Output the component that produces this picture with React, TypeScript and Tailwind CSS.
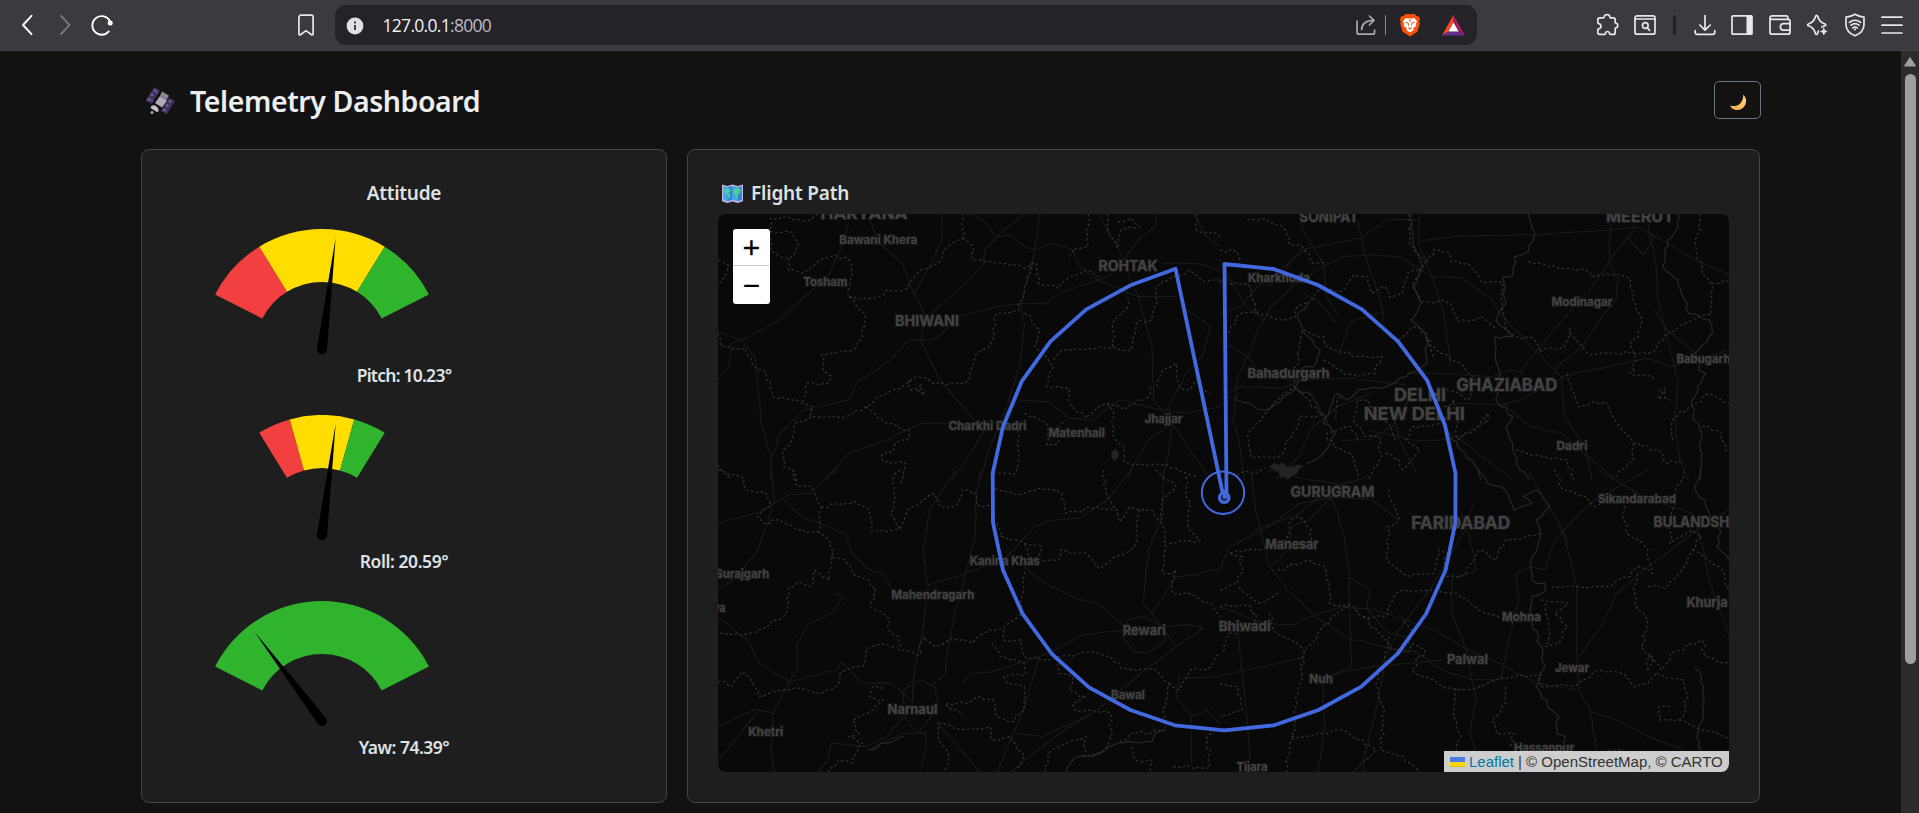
import React from "react";

const SANS = "font-['Noto_Sans','Open_Sans',sans-serif]";

type IconProps = { children: React.ReactNode; className?: string };

function Icon({ children, className = "text-[#e8e7ec]" }: IconProps) {
  return (
    <svg
      width="24"
      height="24"
      viewBox="0 0 24 24"
      fill="none"
      stroke="currentColor"
      strokeWidth="1.7"
      strokeLinecap="round"
      strokeLinejoin="round"
      className={`shrink-0 ${className}`}
    >
      {children}
    </svg>
  );
}

function Slot({ children }: { children: React.ReactNode }) {
  return <div className="flex w-[37.5px] shrink-0 justify-center">{children}</div>;
}

function Toolbar() {
  return (
    <div className="flex h-[51px] w-full items-center border-b border-[#434247] bg-[#3b3a3f]">
      <div className="flex flex-1 items-center">
        <div className="flex w-[335px] items-center">
          <Icon className="ml-[15px] text-white">
            <path d="M16.5 2.8 8 12l8.5 9.2" strokeWidth="1.9" />
          </Icon>
          <Icon className="ml-[14px] text-[#807f84]">
            <path d="M8 2.8 16.5 12 8 21.2" strokeWidth="1.7" />
          </Icon>
          <Icon className="ml-[13px] text-white">
            <path d="M20 8.4A9.3 9.3 0 1 0 18.8 18.4" strokeWidth="1.8" />
            <circle cx="20.2" cy="10" r="2.5" fill="currentColor" stroke="none" />
          </Icon>
          <Icon className="ml-auto mr-[17px] text-[#e8e7ec]">
            <path d="M4.9 21V4.2a2 2 0 0 1 2-2h10.200a2 2 0 0 1 2 2V21c0 1-.9 1.300-1.600.7L12 17.600l-5.500 4.100c-.7.6-1.600.3-1.600-.7Z" />
          </Icon>
        </div>
        <div className="flex h-10 w-[1142px] items-center rounded-[11px] bg-[#242328]">
          <svg width="18" height="18" viewBox="0 0 18 18" className="ml-[11px] mt-px">
            <circle cx="9" cy="9" r="8.4" fill="#e1e0e6" />
            <path d="M9 8v5M9 4.6v1.8" stroke="#3b3a3f" strokeWidth="1.9" />
          </svg>
          <span className="ml-[18.5px] font-['Open_Sans','Noto_Sans',sans-serif] text-[17.5px] leading-[38px] tracking-[-0.7px] text-[#f2f1f6]">
            127.0.0.1<span className="text-[#bdbcc2]">:8000</span>
          </span>
          <div className="ml-auto flex items-center pr-[12px]">
            <Icon className="text-[#a9a8ae]">
              <path d="M3 8v11.2a2 2 0 0 0 2 2h13.6a2 2 0 0 0 2-2V17" />
              <path d="M7.6 16.6c.2-5.6 3.8-9 12-9.2M15.4 3l4.6 4.4-4.6 4.6" />
            </Icon>
            <div className="ml-[7px] h-5 w-px bg-[#89888d]" />
            <svg width="22" height="24" viewBox="0 0 22 24" className="ml-[13px]">
              <path d="M6.4 1h9.2l1.8 2 2.2.2 1.6 3-1 2 .6 2.2-2.4 8.4L11 23.4l-7.4-4.6L1.2 10.4l.6-2.2-1-2 1.6-3L4.6 3Z" fill="#fb4f09" />
              <path d="m6.5 5 2.8.6L11 5.2l1.7.4 2.8-.6 2.6 3.5-1.2 2.2.4 2.2-3.2 2.4.7 1.7-3.8 2.6-3.8-2.6.7-1.7-3.2-2.4.4-2.2-1.2-2.2Z" fill="#fff" />
              <path d="M6.3 9.200 9.200 10l.2 2.600M15.700 9.200 12.800 10l-.2 2.600M9 14.600l2 1 2-1M11 6v3M11 15.600v1.200" fill="none" stroke="#fb4f09" strokeWidth="1" />
            </svg>
            <svg width="23" height="21" viewBox="0 0 23 21" className="ml-[21px]">
              <path d="M11.5 0v7.5L6.4 16.4 0 20.5Z" fill="#ff4724" />
              <path d="M11.5 0 23 20.5l-6.4-4.1-5.1-8.9Z" fill="#9e1f63" />
              <path d="m0 20.5 6.4-4.1h10.2l6.4 4.1Z" fill="#662d91" />
              <path d="m11.5 7.6 5.1 8.8H6.4Z" fill="#fff" />
            </svg>
          </div>
        </div>
        <div className="ml-auto flex items-center pr-[8px]">
          <Slot>
            <Icon>
              <path d="M4.800 4.800h3.400c.6 0 1-.4 1-1C9.200 2.400 10.300 1.600 12 1.600s2.800.8 2.800 2.200c0 .6.400 1 1 1h2.600c1.200 0 1.800.7 1.800 1.800v2.600c0 .6.300.9.800 1 1.200.200 1.800 1 1.800 2.300s-.6 2.100-1.800 2.300c-.5.1-.8.400-.8 1v3.600c0 1.300-.6 2-1.800 2h-2.800c-.6 0-.9-.3-1-.9-.2-1.300-.9-2-2.100-2s-1.900.7-2.100 2c-.1.600-.4.900-1 .9H4.600c-1.200 0-1.800-.7-1.800-1.900v-2.700c0-.6.300-.9.900-1 1.400-.3 2.300-1.200 2.300-2.600s-.9-2.300-2.300-2.600c-.6-.1-.9-.4-.9-1V6.800c0-1.300.7-2 2-2Z" />
            </Icon>
          </Slot>
          <Slot>
            <Icon>
              <rect x="2" y="2.800" width="20" height="18.400" rx="2" />
              <path d="M2 6h20" />
              <circle cx="12.300" cy="12.500" r="2.800" />
              <path d="m14.500 15 2 2.300" strokeWidth="1.800" />
            </Icon>
          </Slot>
          <div className="flex w-[22.5px] justify-center">
            <div className="h-5 w-[3px] rounded bg-[#232227]" />
          </div>
          <Slot>
            <Icon>
              <path d="M12 2.500V17M6.800 12l5.200 5.200 5.200-5.200" />
              <path d="M2.200 17.500v1.700a2.200 2.200 0 0 0 2.200 2.200h15.200a2.200 2.200 0 0 0 2.200-2.200v-1.700" />
            </Icon>
          </Slot>
          <Slot>
            <Icon>
              <rect x="2" y="2.800" width="20" height="18.400" rx="1" />
              <rect x="16.500" y="2.500" width="5.500" height="19" fill="currentColor" stroke="none" />
            </Icon>
          </Slot>
          <Slot>
            <Icon>
              <path d="M22 11.200V8.400a2 2 0 0 0-2-2H3.800A1.800 1.800 0 0 1 2 4.600 1.800 1.800 0 0 1 3.800 2.900h14.400c1 0 1.700.7 1.700 1.700v1.600M2 4.700v14.500a2 2 0 0 0 2 2h16a2 2 0 0 0 2-2v-2" />
              <path d="M22 10.700h-6.400a3.200 3.200 0 0 0 0 6.400H22Z" />
            </Icon>
          </Slot>
          <Slot>
            <Icon>
              <path d="M20 12.800c.5-.2.800-.5.800-.9s-.3-.7-.8-.9c-4.300-1.300-6.300-3.500-7.400-7.700-.1-.5-.5-.9-1-.9s-.9.400-1 .9c-1 4.300-2.800 6.300-7.200 7.700-.5.2-.8.5-.8.900s.3.700.800.900c4.400 1.400 6 3.400 7.200 7.900.1.400.4.800.900.8s.9-.4 1-.8c.2-.9.500-1.800.9-2.600M20 12.800c-1.200.3-2.200.7-3.100 1.200" />
              <path d="m18.800 15.200.9 2.400 2.400.9-2.400.9-.9 2.500-.9-2.500-2.400-.9 2.400-.9Z" fill="currentColor" strokeWidth=".8" />
            </Icon>
          </Slot>
          <Slot>
            <Icon>
              <path d="M12 1.300c2.600 1.700 5.500 2.600 9 2.900v7.200c0 5-3.300 9-9 11.400C6.300 20.400 3 16.400 3 11.400V4.200c3.500-.3 6.400-1.200 9-2.900Z" />
              <path d="M6.500 9.400c3.300-2.800 7.700-2.800 11 0M8 12.200c2.400-1.900 5.600-1.900 8 0M9.800 14.900c1.400-1 3-1 4.400 0" />
              <circle cx="12" cy="16.400" r="1" fill="currentColor" stroke="none" />
            </Icon>
          </Slot>
          <Slot>
            <Icon>
              <path d="M2 4.200h20M2 12.200h20M2 20h20" />
            </Icon>
          </Slot>
        </div>
      </div>
    </div>
  );
}

function Satellite() {
  return (
    <svg width="30" height="28" viewBox="0 0 30 28">
      <path d="M9.5 0 15 3.5 6.5 17 .5 13.5Z" fill="#3d3550" />
      <path d="M24 10.5 30 14l-8.5 13.5L16 24Z" fill="#3d3550" />
      <g fill="#7a52c4">
        <circle cx="9.8" cy="3.7" r="1.4" />
        <circle cx="7" cy="8" r="1.4" />
        <circle cx="4" cy="12.5" r="1.4" />
        <circle cx="12" cy="5.5" r="1" />
        <circle cx="7" cy="13.5" r="1" />
        <circle cx="25" cy="14.5" r="1.4" />
        <circle cx="22.3" cy="18.6" r="1.4" />
        <circle cx="19.5" cy="23" r="1.4" />
      </g>
      <path d="m15 9 7 4.5-5 7-7-4.5Z" fill="#b3a8b8" />
      <path d="m17 4.5 7 4-2.5 4.5-6.5-4Z" fill="#8d8494" />
      <path d="M5.5 21c1-4 6-3.5 8 1.5.5 1.5 0 2.5-1.5 2.5Z" fill="#c9bfd0" />
      <circle cx="7" cy="25.5" r="1.6" fill="#a99db2" />
    </svg>
  );
}

function WorldMap() {
  return (
    <svg width="21" height="19" viewBox="0 0 21 19">
      <path d="M0 .5 5.3 2l5.200-1.500L15.700 2 21 .5v16.800L15.700 19l-5.200-1.500L5.300 19 0 17.300Z" fill="#c5b5dc" />
      <path d="M1.200 2.200 5.300 3.200v14L1.200 16ZM10.500 1.900l5.200 1.300v14l-5.200-1.300Z" fill="#42a7ee" />
      <path d="m5.300 3.200 5.200-1.300v14l-5.200 1.300ZM15.700 3.200l4.100-1V16l-4.100 1.200Z" fill="#2d86d4" />
      <path d="m2.200 5 5.500-.5 1 2.500-2 2 1.500 1.500-.5 3.500L6.500 15l-.5-4-3-2.500ZM11.500 6l2-1.800 3.700-.2 1.600 2-.8 3-2 1-.5 3-1.500 1.500-1-4-2-1.500Z" fill="#48cf9a" />
    </svg>
  );
}

function Moon() {
  return (
    <svg width="17" height="17" viewBox="0 0 17 17">
      <defs>
        <linearGradient id="moon" x1="1" y1="0" x2="0" y2="1">
          <stop offset="0" stopColor="#ffd77a" />
          <stop offset="1" stopColor="#f9a94e" />
        </linearGradient>
      </defs>
      <path d="M13.200.400C16 3 17 7.200 15.200 11c-2.300 5-9 6.800-13.600 3C1 13.400.600 12.500.400 11.400c3 1.200 7 .7 9.700-2 2.400-2.400 3.400-5.700 3.100-9Z" fill="url(#moon)" />
    </svg>
  );
}

/* ---------- Gauges ---------- */

type Zone = { from: number; to: number; color: string };
const RED = "#f23f3f";
const YELLOW = "#ffdd00";
const GREEN = "#30b32d";
const CX = 107;
const CY = 120;

function polar(r: number, deg: number) {
  const a = (deg * Math.PI) / 180;
  return `${(CX + r * Math.sin(a)).toFixed(2)} ${(CY - r * Math.cos(a)).toFixed(2)}`;
}

type GaugeProps = { zones: Zone[]; angle: number; label: string; spacing: string };

function Gauge({ zones, angle, label, spacing }: GaugeProps) {
  return (
    <div className="h-[186px]">
      <svg width="215" height="126" viewBox="0 0 215 126" className="ml-[44px] block">
        {zones.map((z) => (
          <path
            key={z.from}
            d={`M${polar(120, z.from)}A120 120 0 0 1 ${polar(120, z.to)}L${polar(67, z.to)}A67 67 0 0 0 ${polar(67, z.from)}Z`}
            fill={z.color}
          />
        ))}
        <g transform={`rotate(${angle} ${CX} ${CY})`}>
          <path d={`M${CX} ${CY - 112}L${CX + 5.1} ${CY}A5.1 5.1 0 0 1 ${CX - 5.1} ${CY}Z`} fill="#000" />
        </g>
      </svg>
      <p className={`pt-[6px] text-center text-[17.5px] font-semibold leading-[28px] text-[#dee2e6] ${spacing}`}>
        {label}
      </p>
    </div>
  );
}

const threeZones = (outer: number, inner: number): Zone[] => [
  { from: -outer, to: -inner, color: RED },
  { from: -inner, to: inner, color: YELLOW },
  { from: inner, to: outer, color: GREEN },
];

/* ---------- Map ---------- */

// [text, centre x, baseline y, width, size]
const LABELS: [string, number, number, number, number][] = [
  ["HARYANA", 864, 218.3, 87, 15],
  ["Bawani Khera", 878.3, 243.7, 78, 12],
  ["Tosham", 825.3, 285, 44, 12],
  ["BHIWANI", 927, 325.3, 64, 14],
  ["ROHTAK", 1128, 270, 59, 14],
  ["Charkhi Dadri", 987.5, 429.3, 78, 12],
  ["Matenhail", 1076.7, 436.3, 56.5, 12],
  ["Jhajjar", 1163.5, 422.7, 38, 12],
  ["SONIPAT", 1328.8, 221, 59, 14],
  ["MEERUT", 1640, 221, 68, 15],
  ["Kharkhoda", 1279, 281.3, 62, 12],
  ["Modinagar", 1582, 305.3, 61, 12],
  ["Bahadurgarh", 1288.5, 377.3, 82, 13],
  ["Babugarh", 1703.5, 362.3, 54, 12],
  ["GHAZIABAD", 1506.8, 390.7, 101, 17],
  ["DELHI", 1420, 400, 52, 18],
  ["NEW DELHI", 1414.3, 419.3, 101, 18],
  ["Dadri", 1572, 449.3, 31, 12],
  ["Kanina Khas", 1004.7, 564.7, 70, 12],
  ["Surajgarh", 742.3, 577, 54, 12],
  ["va", 719.5, 611, 12, 12],
  ["Mahendragarh", 932.8, 598.3, 83, 12],
  ["Rewari", 1144.3, 634.7, 43, 13],
  ["Narnaul", 912.5, 713, 50, 13],
  ["Khetri", 765.7, 735, 35, 12],
  ["Bawal", 1128, 698.3, 34, 12],
  ["GURUGRAM", 1332.5, 496.3, 84, 14.5],
  ["Manesar", 1291.8, 548.3, 53, 13],
  ["FARIDABAD", 1460.7, 528.3, 99, 17],
  ["Sikandarabad", 1637, 502, 78, 12],
  ["BULANDSHAHR", 1706, 526.7, 105, 14.5],
  ["Khurja", 1707, 606.3, 41, 13],
  ["Mohna", 1521.5, 620, 39, 12],
  ["Bhiwadi", 1244.7, 630.7, 52, 13],
  ["Palwal", 1467.4, 663, 41, 13],
  ["Jewar", 1572, 671.7, 34, 12],
  ["Nuh", 1321, 682, 23.5, 12],
  ["Hassanpur", 1544, 751, 60, 12],
  ["Tijara", 1252, 770, 31, 12],
];

const FLIGHT =
  "1226.5,496 1224.5,264 1273.7,269 1317.8,285 1361.9,309.3 1398,341.3 1427.3,380.7 1444.9,425 1455.5,473.3 1455.4,522.7 1445.6,570 1426,614 1397.9,653.3 1361.3,686.7 1318.5,710 1274,725.3 1224.5,730.3 1174.8,725.3 1130.4,710 1089,687.3 1051.9,654 1022.3,613.3 1003,570 993,522.7 992.7,473.3 1003,426.7 1021.6,381.7 1050.5,341.3 1086.3,309.3 1130.4,285.3 1175.5,268.7 1223.5,497";

type Tile = { transform: string; borders: string[]; roads: string[]; rivers: string[] };

const TILES: Tile[] = [
  {
    transform: "translate(680 140) scale(.3444 .3333)",
    borders: [
      "400,222 380,240 262,235 262,275 325,277 345,310 330,345 300,355 262,330 262,275",
      "315,355 315,390 360,400 400,365 450,345 492,360 495,420 490,470 535,520 530,590 510,625 410,645 415,690 440,710 430,730 370,730 355,790",
      "490,470 560,475 600,450 660,445 690,400 740,375 790,310 820,295 820,222",
      "820,295 850,320 850,360 930,370 1000,385 1035,370 1040,430 1100,445 1130,410 1180,390 1215,410",
      "110,580 120,620 190,625 215,680 250,700 270,770 355,790 385,800 380,830 470,835 540,800 600,760 640,745 690,710 770,735 840,720 855,650 900,620 920,520 985,510 1000,440 1025,360",
      "1000,520 1045,570 1030,620 1085,680 1065,740 1130,745 1130,790 1180,835 1240,790 1290,810 1360,770 1365,740",
      "1085,660 1110,630 1240,625 1310,630 1325,550 1370,540 1385,490 1380,440 1430,410 1480,390 1520,425 1568,420",
      "1255,620 1260,540 1300,500 1300,470",
      "380,830 330,860 325,900 300,930 300,980 335,1000 340,1030",
      "540,800 600,850 665,870 660,900 625,910 620,935 590,940 590,965 655,970 640,1030",
      "1130,350 1145,325 1185,320 1185,222",
      "1240,222 1250,290 1270,325 1280,270 1335,260 1310,235 1270,245",
      "1240,790 1260,830 1255,880 1290,920 1290,965 1400,975 1500,1010",
      "1385,740 1400,690 1440,670 1450,740 1480,750 1500,720 1540,760",
      "1000,820 1065,850 1065,915 1100,910 1100,860 1120,840",
      "980,870 985,940 970,1005 915,1000",
      "665,720 670,750 700,735 710,765 680,750",
      "110,360 140,375 130,410 110,440",
      "1500,222 1500,270 1568,290",
      "110,975 150,1015",
    ],
    roads: [
      "490,250 465,330 430,410 350,480 290,540 180,600 110,575",
      "180,600 220,660 235,850 265,960 265,1020",
      "110,720 140,680 150,610 180,600",
      "550,240 580,310 645,370 670,440 710,520 700,600 740,690 770,740 860,845 935,850",
      "760,222 760,300 740,350 680,460",
      "1000,222 940,270 885,330 880,370 850,410 730,520",
      "810,530 920,500 990,490 1060,492 1100,460 1215,420 1240,410 1300,360",
      "1045,222 1030,330 990,490 1000,560 985,680 945,810 900,920 870,1020",
      "840,222 880,240 920,290 960,285 1000,320 1030,330 1080,310 1140,330 1160,380 1215,420 1330,470 1440,470",
      "780,560 750,590 730,600 665,600 620,650 560,700 520,720 490,780 360,810 290,880 265,960",
      "845,850 700,850 600,900 490,940 420,1020",
      "790,1020 850,930 890,860",
      "940,830 990,780 1070,785 1130,835 1200,840 1275,780 1380,805 1470,820 1568,800",
      "1300,400 1330,470 1370,620 1375,780 1430,850 1480,930 1540,1010",
      "1430,850 1420,930 1400,1020",
      "1430,850 1360,900 1300,1010",
      "1215,222 1290,360 1330,300 1380,260 1385,222",
      "1440,390 1460,500 1540,560 1520,640 1470,700 1415,810",
      "1400,370 1500,370 1568,390",
      "1490,222 1530,290 1568,320",
    ],
    rivers: [],
  },
  {
    transform: "translate(1220 140) scale(.3444 .3333)",
    borders: [
      "80,240 130,235 190,270 200,310 240,320 270,370 310,370",
      "0,330 50,335 55,370 0,380",
      "0,425 80,430 90,470 110,520 180,540 220,530 225,500 255,490",
      "25,580 60,520 110,515",
      "225,640 235,590 240,570 300,590 310,620 400,650 470,650 450,700 400,710 350,690 300,660",
      "255,490 300,440 350,455 390,405 430,410 440,460 480,440 490,470 530,460 545,400 580,390",
      "550,222 550,310 595,370 560,430 585,490 645,480 670,490 690,545 760,530 800,565",
      "600,365 620,330 660,335 670,365 720,370 760,425 820,425 820,510 830,570 860,590 910,595 930,635",
      "895,365 985,385 1060,390 1080,410 1140,405 1190,415 1205,490 1225,540 1215,590 1190,610 1210,660 1190,700 1260,715",
      "930,635 1000,620 1015,565 1040,610 1080,645 1150,640 1260,635 1310,575 1390,530 1425,525 1430,430 1478,425",
      "1395,222 1395,270 1380,300 1400,400 1430,440",
      "400,900 380,860 310,880 330,920 380,940 400,1020",
      "225,640 215,740 160,785 100,860 80,890 90,950 170,950 210,880 230,830 290,830",
      "215,740 260,780 300,830",
      "510,900 490,850 440,830 430,780 400,780 390,850 420,890 460,890 470,950 440,1000 430,1020",
      "480,940 520,960 530,990 580,930 540,900 560,860 640,850",
      "600,600 640,640 700,670 740,720 720,780 640,740",
      "520,600 560,560 600,580 620,650",
      "650,800 680,780 690,900 740,870 780,820 770,850",
      "1010,700 1040,800 1120,785 1140,830 1160,860 1195,900 1200,960 1140,1015",
      "1200,910 1270,930 1300,970 1340,960",
      "860,930 920,945 1010,960 1030,1020",
      "1275,750 1305,780 1270,775 1300,740",
      "1315,900 1315,840 1420,760 1478,790",
      "1400,860 1450,870 1470,940",
      "20,1000 110,995 130,985",
      "350,770 340,800 330,840",
    ],
    roads: [
      "230,222 240,270 300,370 310,470 345,530",
      "400,240 420,340 450,430 475,520 470,550",
      "0,520 60,500 110,440 210,360 250,325 410,295 440,270 490,240 580,240",
      "240,320 190,390 140,440",
      "220,430 150,500 110,570 80,650 50,710 40,850 55,900 70,1020",
      "220,430 300,380 360,350 425,345 520,350 615,410 700,412 790,480 820,530 915,630 1000,720",
      "580,222 575,305 615,410 650,520 670,680",
      "580,303 700,287 900,285 1130,270 1210,260",
      "1135,250 1130,365 1080,440 1010,520 920,630 870,700",
      "1210,260 1130,360 1155,420 1150,480 1110,530 1050,620 980,680 960,720",
      "1240,240 1265,370 1270,470 1300,600 1330,720 1320,850 1335,960 1360,1020",
      "1210,260 1300,310 1380,360 1478,405",
      "1180,290 1230,345 1260,290 1240,270",
      "0,600 80,650 120,700 200,720 380,715 540,735",
      "990,710 1240,655 1310,680 1380,660 1478,630",
      "990,710 1000,830 1060,920 1080,1020",
      "820,790 900,860 990,880 1080,960 1140,1010",
      "1260,510 1300,570 1380,640",
      "345,645 380,545 475,515",
      "0,770 60,740 180,745 260,715",
      "160,1020 230,950 260,870 340,800 440,760",
      "690,790 820,795 870,780 1000,710",
      "550,700 640,700 790,710 840,690 880,700",
      "240,460 280,480 340,550",
      "430,870 560,900 640,900 700,890 780,840",
      "500,800 520,900 570,1000",
      "350,900 430,900 500,860 560,760",
      "0,360 40,440 75,500 130,540",
      "660,870 700,900 800,980 850,1020",
    ],
    rivers: [
      "555,222 560,310 590,380 560,440 585,490 555,540 600,590 600,670 540,710 470,745 400,750 370,780 340,760 320,800 300,850 335,880 300,940 250,970",
      "895,222 915,280 895,335 855,350 850,405 820,410 830,490 800,540 850,590 800,590 800,660 815,700 800,780 850,830 830,860 850,910 870,990 900,1020",
      "1330,222 1330,265 1300,300 1285,380 1330,420 1360,520 1420,540 1430,580 1380,640 1390,690 1410,700 1370,780 1375,840 1400,880 1395,1020",
      "40,770 130,810 220,745 270,770 310,850",
      "650,860 690,920 750,990 760,1020",
      "255,490 225,520 240,570 290,630 280,670 230,690 220,740",
    ],
  },
  {
    transform: "translate(680 470) scale(.3444 .3333)",
    borders: [
      "110,0 180,20 190,60 250,70 260,110 225,140 240,160 290,150 340,180 400,185 410,110 380,50 340,50 330,0",
      "410,110 510,95 550,120 555,185 640,175 660,120 740,70 755,110 800,110 820,60 860,70 860,105 910,110",
      "640,0 620,20 620,100 610,130 640,175",
      "400,185 440,220 440,260 480,270 500,310 570,355 555,410 610,450 605,480 635,500 635,540 690,555 710,500 740,530 790,505 850,520 900,480 940,475 990,430 995,330 1000,300",
      "440,260 435,330 390,300 380,350 345,335 315,355 310,430 250,475 200,490 110,495",
      "110,635 150,650 180,605 200,620 230,680 300,660 350,655 410,670 460,645 470,605 530,590 540,540 580,525 630,530",
      "915,55 980,75 1040,55 1110,70 1120,130 1215,110 1270,120 1275,155 1310,110 1370,120 1410,190 1400,310 1440,300 1430,370 1490,375 1540,400 1568,440",
      "920,160 930,200 1000,220 1045,225 1045,270 1100,270 1105,240 1180,250 1215,295 1250,270 1320,230 1335,120",
      "905,520 930,560 1000,580 1005,610 940,620 950,640 1000,650 1000,720 970,755 920,740 910,690 870,680 830,700 770,700 820,740",
      "750,760 830,780 900,770 905,810 960,800 1000,860 975,900",
      "940,480 940,510 990,510 1000,560 1060,570 1100,560 1190,545 1250,560 1280,595 1380,600 1420,640 1400,720 1410,780 1320,790 1270,820",
      "1095,580 1100,610 1140,620 1130,660 1180,680 1140,700 1145,720 1195,720 1250,730 1250,800 1230,840 1180,860",
      "1000,222 1010,260 1040,265",
      "590,655 560,650 550,680 590,690 560,720 500,750 520,790 490,800 530,820 500,880 460,870 430,906",
      "750,770 750,810 780,850 765,906",
      "1170,860 1180,800 1100,830 1070,850 1060,906",
      "1230,0 1240,80 1270,120",
      "1380,0 1440,50 1400,90 1400,150",
      "1470,20 1480,180 1510,210 1420,220",
      "1420,640 1450,660 1480,600 1530,600 1568,550",
      "1568,780 1530,800 1540,890 1430,890",
      "1310,830 1320,870 1370,870 1365,906",
    ],
    roads: [
      "265,0 275,90 240,200 220,250 165,320 110,360",
      "455,0 375,72 320,72 280,95 220,130 110,160",
      "300,90 360,145 480,190 500,250 550,300 590,310 610,350",
      "800,0 725,120 705,250 720,350 705,490 680,600 675,695",
      "875,0 860,70 858,190 820,350 800,420 775,550 770,610 725,650",
      "450,370 475,380 440,430 370,465 340,520 340,600 315,640 270,730 265,850 275,906",
      "110,440 195,510 230,580 290,620 320,635 460,597 465,575 530,640 610,640 645,665",
      "720,345 830,310 950,260 1030,170 1080,150 1160,145 1240,90 1310,0",
      "1000,290 1060,340 1150,385 1220,405 1290,470",
      "1290,480 1170,495 1080,545 1000,575 905,605 840,610 820,640",
      "1405,0 1400,140 1360,240 1345,400 1370,430 1440,525",
      "1370,430 1440,320 1500,315 1540,300 1568,300",
      "1290,480 1300,450 1350,440 1400,470 1410,510 1360,550 1320,545 1285,500",
      "1400,470 1480,465 1520,475 1440,530 1350,600 1200,730 1100,790 960,906",
      "650,700 650,660 700,630 740,650 750,700 715,760 690,790 650,740 650,700",
      "110,770 170,740 220,718 270,730",
      "230,720 110,875",
      "710,790 650,790 545,840",
      "650,740 600,800 540,830 440,820 430,870 400,906",
      "710,780 715,830 700,900",
      "740,750 870,906",
      "1045,560 1000,710 920,906",
      "970,790 1050,800 1200,730",
      "1450,620 1440,680 1485,740 1485,880",
      "1485,740 1530,720 1568,760",
      "1568,620 1450,625",
      "680,600 675,695 640,660",
    ],
    rivers: ["1120,906 1150,860 1200,860 1270,820 1370,815 1380,790 1410,780", "545,840 600,820 650,800"],
  },
  {
    transform: "translate(1220 470) scale(.4458 .3333)",
    borders: [
      "210,240 205,180 175,140 155,160 145,210 100,235 20,250 50,260 40,340 0,360",
      "130,300 200,270 235,290 245,400 290,405 320,440 370,440 390,380 410,360 480,360 540,380 580,420 640,450 660,460",
      "380,60 400,150 375,170 380,280 420,320 480,310 490,240 510,250 500,320 540,320 580,240 620,270 640,210 720,190",
      "750,0 770,60 820,80 840,110 900,80 910,180 960,240 970,310 940,290 920,320 860,350 800,350 740,350",
      "935,310 930,400 960,450 945,530 970,570 960,600",
      "960,350 1000,355 1030,310 1060,240 1080,200 1060,180 1010,220 1010,150 1040,0",
      "720,390 780,400 750,430 780,470 760,520 730,530 740,490 730,400",
      "1060,240 1120,290 1142,370",
      "720,650 800,645 850,600 900,610 930,650 960,640 980,610",
      "960,600 965,550 990,600 1010,550 1080,510 1090,560 1142,580",
      "980,610 1040,630 1050,680 1030,750 985,750 985,710 1010,710",
      "1030,750 1080,780 1142,805",
      "430,520 460,540 430,600 520,655 570,655 600,640 660,620 720,615 720,650",
      "530,655 525,720 540,800 530,850",
      "640,650 640,700 610,750 620,790 660,790 650,830",
      "110,430 120,480 190,545 250,440 290,400",
      "190,545 180,640 165,760 150,906",
      "380,500 370,560 350,640 370,720 360,840 410,860 450,906",
      "160,800 240,790 270,780 320,810 350,840 300,906",
      "0,640 40,650 50,720 0,740",
      "0,410 70,410 80,450 50,480 20,490 10,550",
      "130,370 90,400 40,350",
      "320,440 380,530 420,550 430,480 410,450",
      "870,840 900,840 930,870",
    ],
    roads: [
      "70,0 80,120 95,200 110,290 160,370 210,435 290,505 380,535 440,545 500,600 565,630 630,630 650,500 670,390 665,310 700,290 730,300 750,210 830,100 880,60 960,0",
      "250,80 280,200 290,320 335,360 330,420 380,490 420,500",
      "250,80 340,90 400,150",
      "250,80 200,150 160,170 155,240 110,290",
      "260,80 180,100 110,170 20,230 0,300",
      "0,410 100,460 170,465 180,450 270,410 350,420 480,480 560,540 640,590 710,640 800,660",
      "540,130 560,200 575,300 520,330 520,430 550,530 565,630 575,690 560,790 580,880",
      "570,100 550,180 470,360 400,480 370,570 355,690 325,850 320,906",
      "770,180 800,350 800,530 805,660 830,720 845,840",
      "805,560 860,460 890,370 970,280 1060,190 1142,120",
      "830,725 890,750 960,800 1040,840",
      "850,0 960,90 1060,130 1080,220 1100,340 1142,500",
      "290,320 290,400 295,590 230,630",
      "40,490 50,610 65,820 65,906",
      "230,620 340,590 500,570",
      "230,630 235,770 220,906",
      "190,560 100,590 0,615",
      "690,0 760,160 780,220",
      "80,180 180,130 240,60 330,20",
      "110,0 200,30 300,50",
    ],
    rivers: [
      "580,0 600,40 640,60 660,120 700,100 680,80 710,60 740,110 710,150 720,200 700,260 700,330 730,340 730,365 700,380 700,460 715,500 725,600 710,650 735,710 760,740 755,790 775,800 770,825",
      "1080,0 1065,50 1090,110 1120,170 1115,230 1142,270",
      "1065,595 1080,620 1085,720 1070,800 1080,840",
    ],
  },
];

// Breaks every straight run into short uneven steps so lines look surveyed.
function roughen(points: string, amp: number, seed: number) {
  const pts = points.split(" ").map((p) => p.split(",").map(Number));
  let s = seed * 7919 + 17;
  const rnd = () => {
    s = (s * 1103515245 + 12345) % 2147483648;
    return s / 2147483648 - 0.5;
  };
  const out: string[] = [`${pts[0][0]},${pts[0][1]}`];
  for (let i = 1; i < pts.length; i++) {
    const [x0, y0] = pts[i - 1];
    const [x1, y1] = pts[i];
    const n = Math.max(1, Math.round(Math.hypot(x1 - x0, y1 - y0) / 16));
    for (let k = 1; k < n; k++) {
      const t = k / n;
      out.push(`${(x0 + (x1 - x0) * t + rnd() * amp).toFixed(1)},${(y0 + (y1 - y0) * t + rnd() * amp).toFixed(1)}`);
    }
    out.push(`${x1},${y1}`);
  }
  return out.join(" ");
}

function FlightMap() {
  return (
    <div className="relative h-[558px] w-[1011px] overflow-hidden rounded-lg bg-[#090909]">
      <svg width="1011" height="558" viewBox="718 214 1011 558" className="block">
        {TILES.map((t, i) => (
          <g key={i} transform={t.transform} fill="none" strokeLinejoin="round">
            {t.roads.map((p, j) => (
              <polyline key={`a${j}`} points={roughen(p, 3, j + 1)} stroke="#1b1b1b" strokeWidth="1.1" vectorEffect="non-scaling-stroke" />
            ))}
            {t.rivers.map((p, j) => (
              <polyline key={`b${j}`} points={roughen(p, 11, j + 60)} stroke="#262626" strokeWidth="1.3" vectorEffect="non-scaling-stroke" />
            ))}
            {t.borders.map((p, j) => (
              <polyline key={`c${j}`} points={roughen(p, 12, j + 30)} stroke="#323232" strokeWidth="1.3" strokeDasharray="2.6 2.4" vectorEffect="non-scaling-stroke" />
            ))}
          </g>
        ))}
        <path d="m1274 463 5 2 3-3 4 4 5 1 6-2 7 1-5 3-2 5-6 2-3 4-4-3-4 1-1-6-6-3-4-2ZM1112 451l4-2 3 4-1 5-4 3-3-4Z" fill="#242424" />
        <g fontFamily="Inter, sans-serif" fontWeight="700" textAnchor="middle" fill="#434343" stroke="#171717" strokeWidth="2" paintOrder="stroke" strokeLinejoin="round">
          {LABELS.map(([text, x, y, w, size]) => (
            <text key={text} x={x} y={y + 0.6} fontSize={size} textLength={w} lengthAdjust="spacingAndGlyphs">
              {text}
            </text>
          ))}
        </g>
        <g fill="none" stroke="#4169e1">
          <polyline points={FLIGHT} strokeWidth="3.8" strokeLinejoin="round" strokeLinecap="round" />
          <circle cx="1223" cy="492.7" r="21.2" strokeWidth="2" />
          <circle cx="1224.2" cy="497.7" r="4.8" strokeWidth="3.2" fill="#1b2a56" />
          <path d="M1224.5 490v7h3" strokeWidth="3" />
        </g>
      </svg>
      <div className="absolute left-[15px] top-[15px] flex h-[75px] w-[37px] flex-col overflow-hidden rounded-[3px] bg-white text-center font-['DejaVu_Sans',sans-serif] text-[23px] text-black">
        <button className="h-[37px] border-b border-[#ccc] leading-[36px] [-webkit-text-stroke:0.5px_black]">+</button>
        <button className="h-[38px] leading-[36px] [-webkit-text-stroke:0.3px_black]">−</button>
      </div>
      <div className="absolute bottom-0 right-0 flex h-[21px] w-[285px] items-center whitespace-nowrap bg-[#ffffffcc] pl-[6px] font-['Liberation_Sans',Arial,sans-serif] text-[15px] leading-[21px] text-[#333]">
        <svg width="15" height="10" viewBox="0 0 15 10" className="mr-[4px]">
          <path d="M0 0h15v5H0z" fill="#4c7be1" />
          <path d="M0 5h15v4H0z" fill="#ffd500" />
          <path d="M0 9h15v1H0z" fill="#e0bc00" />
        </svg>
        <span className="text-[#0078a8]">Leaflet</span>
        <span className="ml-[4px]">| © OpenStreetMap, © CARTO</span>
      </div>
    </div>
  );
}

export default function App() {
  return (
    <div className={`flex h-[813px] w-[1919px] flex-col overflow-hidden bg-[#121212] ${SANS}`}>
      <Toolbar />
      <div className="flex min-h-0 flex-1">
        <main className="flex-1 px-[141px] pt-[30px]">
          <header className="flex h-[38px] items-center justify-between">
            <div className="flex items-center pl-[4px] pt-[2px]">
              <Satellite />
              <h1 className="ml-[15px] text-[28.5px] font-semibold leading-[38px] tracking-[-0.42px] text-[#eceef0]">
                Telemetry Dashboard
              </h1>
            </div>
            <button className="-mr-px flex h-[38px] w-[47px] items-center justify-center rounded-[5px] border border-[#6c757d] pl-px pt-[4px]">
              <Moon />
            </button>
          </header>
          <div className="mt-[30px] flex gap-5">
            <section className="h-[654px] w-[526px] shrink-0 rounded-lg border border-[#444] bg-[#1e1e1e] px-[29px] pt-[28px]">
              <h2 className="h-[51px] text-center text-[19px] font-semibold leading-[30px] tracking-[-0.25px] text-[#dee2e6]">
                Attitude
              </h2>
              <Gauge zones={threeZones(63, 31.5)} angle={7} label="Pitch: 10.23°" spacing="tracking-[-0.75px]" />
              <Gauge zones={threeZones(31.5, 15.6)} angle={7} label="Roll: 20.59°" spacing="tracking-[-0.42px]" />
              <Gauge
                zones={[{ from: -63, to: 63, color: GREEN }]}
                angle={-37.1}
                label="Yaw: 74.39°"
                spacing="tracking-[-0.5px]"
              />
            </section>
            <section className="h-[654px] w-[1073px] shrink-0 rounded-lg border border-[#444] bg-[#1e1e1e] px-[30px] pt-[28px]">
              <h2 className="flex h-[36px] items-start pl-[4px] text-[19px] font-semibold leading-[30px] tracking-[-0.2px] text-[#dee2e6]">
                <span className="mr-[8px] mt-[6px]">
                  <WorldMap />
                </span>
                Flight Path
              </h2>
              <FlightMap />
            </section>
          </div>
        </main>
        <div className="flex w-[18px] flex-col items-center bg-[#2c2c2c]">
          <svg width="12" height="10" viewBox="0 0 12 10" className="mt-[6px]">
            <path d="M6 .5 11.500 9H.500Z" fill="#9f9f9f" stroke="#9f9f9f" strokeLinejoin="round" />
          </svg>
          <div className="mt-[7px] h-[590px] w-[11px] rounded-full bg-[#9f9f9f]" />
        </div>
      </div>
    </div>
  );
}
